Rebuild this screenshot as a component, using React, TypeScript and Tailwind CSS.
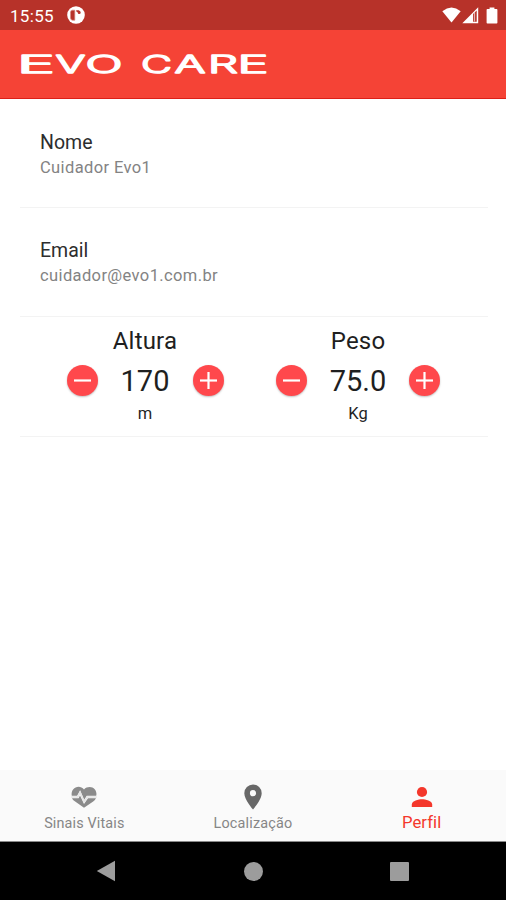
import React, { useState } from 'react';

interface ProfileFieldProps {
  label: string;
  value: string;
  spacing: string;
}

interface StepperProps {
  title: string;
  unit: string;
  display: string;
  width: string;
  onDecrease: () => void;
  onIncrease: () => void;
}

// x position and drawn width of every wordmark letter
const WORDMARK = [
  { char: 'E', x: 17, width: 38 },
  { char: 'V', x: 55.5, width: 30 },
  { char: 'O', x: 85.5, width: 37 },
  { char: 'C', x: 141, width: 31 },
  { char: 'A', x: 174.5, width: 31 },
  { char: 'R', x: 208, width: 30 },
  { char: 'E', x: 237.5, width: 31 },
];

const StatusBar: React.FC = () => (
  <div className="flex h-[30px] items-center bg-[#b73229] pl-[10px] pr-[8px] text-white">
    <span className="w-[45px] pt-[2px] text-[17px] leading-[20px] tracking-[0.3px]">15:55</span>
    <svg className="ml-[12px] h-[18px] w-[18px]" viewBox="0 0 18 18">
      <circle cx="9" cy="9" r="8.8" fill="#fff" />
      <path d="M5.2 4.2Q3.5 4.4 3.5 6.2V12Q3.5 14 5.4 14.2H7.8V4.2Z" fill="#b73229" stroke="#d98a84" strokeWidth=".7" />
      <path d="M9.2 4.2H11.6Q13.8 4.6 13.8 7Q12.6 8.8 11 7.4Q10.8 5.8 9.2 5.6Z" fill="#b73229" />
    </svg>
    <div className="ml-auto flex items-center">
      <svg className="h-[16px] w-[19px]" viewBox="0 0 19 16">
        <path d="M.3 4.2Q9.5-3 18.7 4.2L9.5 15.6Z" fill="#fff" />
      </svg>
      <svg className="ml-[1px] h-[17px] w-[17px]" viewBox="0 0 17 17">
        <path fillRule="evenodd" d="M16.2.3V16.2H.3ZM11.1 7.1V14.7H14.7V3.5Z" fill="#fff" />
        <path d="M12.6 5.4V14.5" stroke="#fff" strokeWidth=".7" />
      </svg>
      <svg className="ml-[7px] h-[17px] w-[12px]" viewBox="0 0 12 17">
        <path d="M3.6.5H8.4V2H10.6Q11.4 2 11.4 2.8V15.7Q11.4 16.5 10.6 16.5H1.4Q.6 16.5.6 15.7V2.8Q.6 2 1.4 2H3.6Z" fill="#fff" />
      </svg>
    </div>
  </div>
);

const Header: React.FC = () => (
  <header className="flex h-[69px] items-center border-b border-[#dc2018] bg-[#f54336] pl-[16px]">
    <svg className="h-[30px] w-[256px] font-['Inter'] font-light" viewBox="16 49 256 30" fill="#fff" stroke="#fff" strokeWidth="1.3" strokeLinejoin="round" fontSize="23.5">
      {WORDMARK.map(({ char, x, width }) => (
        <text key={x} x={x} y="72.8" textLength={width} lengthAdjust="spacingAndGlyphs">{char}</text>
      ))}
    </svg>
  </header>
);

const ProfileField: React.FC<ProfileFieldProps> = ({ label, value, spacing }) => (
  <div className={`ml-5 mr-[18px] flex h-[109px] flex-col border-b border-[#f3f3f3] pl-5 ${spacing}`}>
    <span className="text-[19.5px] leading-[24px] text-[#2d2d2d]">{label}</span>
    <span className="mt-[1px] text-[16.5px] leading-[24px] tracking-[0.38px] text-[#838383]">{value}</span>
  </div>
);

const RoundButton: React.FC<{ plus?: boolean; label: string; onClick: () => void }> = ({ plus, label, onClick }) => (
  <button aria-label={label} onClick={onClick} className="h-[31px] w-[31px] rounded-full bg-[#ff484c] shadow-[0_1px_2px_rgba(0,0,0,0.25)]">
    <svg viewBox="0 0 31 31" className="h-[31px] w-[31px]" stroke="#fff" strokeWidth="2.2">
      <path d="M7 15.5H24" />
      {plus && <path d="M15.5 7V24" />}
    </svg>
  </button>
);

const Stepper: React.FC<StepperProps> = ({ title, unit, display, width, onDecrease, onIncrease }) => (
  <div className="flex w-[212px] flex-col items-center text-[#1f1f1f]">
    <span className="text-[24px] leading-[28px] tracking-[0.2px]">{title}</span>
    <div className={`mt-[8px] flex h-[35px] items-center justify-between ${width}`}>
      <RoundButton label={`Diminuir ${title}`} onClick={onDecrease} />
      <span className="pt-[2px] text-[29px] leading-[33px]">{display}</span>
      <RoundButton plus label={`Aumentar ${title}`} onClick={onIncrease} />
    </div>
    <span className="mt-[6px] text-[16.5px] leading-[20px]">{unit}</span>
  </div>
);

const TabBar: React.FC = () => (
  <nav className="grid h-[72px] grid-cols-3 border-b border-[#8a8a8a] bg-[#fafafa] text-[#868686]">
    <div className="flex flex-col items-center pt-[16px]">
      <svg className="h-[22px] w-[26px]" viewBox="0 0 26 22">
        <path d="M13 3.4C10-.3 4.8.2 2.3 3.2C.7 5.1.3 7.4.8 9.8H6.1L9.1 4.2L13.2 13.7L15.7 9.8H25.2C25.8 7.4 25.3 5.1 23.7 3.2C21.2.2 16 .2 13 3.4Z" fill="#8b8b8b" />
        <path d="M1 12.2H7.6L9 9.5L13 18L17 12.2H25Q24.2 14 22.2 15.4L13 21.7L3.8 15.3Q1.8 14 1 12.2Z" fill="#8b8b8b" />
        <path d="M.2 11H6.8L9.1 6.4L13.1 15.8L16.3 11H25.8" fill="none" stroke="#e4e4e4" strokeWidth="1.5" />
      </svg>
      <span className="mt-[6px] text-[14.4px] leading-[20px] tracking-[0.15px]">Sinais Vitais</span>
    </div>
    <div className="flex flex-col items-center pt-[14px]">
      <svg className="h-[26px] w-[18px]" viewBox="0 0 18 26">
        <path fillRule="evenodd" d="M9 .5A8.7 8.7 0 0 0 .3 9.2C.3 15.7 9 25.5 9 25.5S17.7 15.7 17.7 9.2A8.7 8.7 0 0 0 9 .5ZM9 12.3A3.1 3.1 0 1 1 9 6.1A3.1 3.1 0 0 1 9 12.3Z" fill="#686868" />
      </svg>
      <span className="mt-[4px] text-[14.4px] leading-[20px] tracking-[0.2px]">Localização</span>
    </div>
    <div className="flex flex-col items-center pt-[16px] text-[#f4372b]">
      <svg className="h-[22px] w-[22px]" viewBox="0 0 22 22">
        <circle cx="11" cy="6" r="5.1" fill="currentColor" />
        <path d="M.8 21V18.4C.8 15 7.6 13.3 11 13.3S21.2 15 21.2 18.4V21Z" fill="currentColor" />
      </svg>
      <span className="mt-[5px] text-[16.7px] leading-[20px] tracking-[0.1px]">Perfil</span>
    </div>
  </nav>
);

const SystemNav: React.FC = () => (
  <div className="flex h-[58px] items-center justify-between bg-black pl-[96px] pr-[96px]">
    <svg className="h-[22px] w-[20px]" viewBox="0 0 20 22">
      <path d="M.8 11L19 .7V21.3Z" fill="#9c9c9c" />
    </svg>
    <div className="ml-[1px] h-[19px] w-[19px] rounded-full bg-[#9c9c9c]" />
    <div className="mr-[1px] h-[19px] w-[19px] rounded-[1px] bg-[#9c9c9c]" />
  </div>
);

const App: React.FC = () => {
  const [height, setHeight] = useState(170);
  const [weight, setWeight] = useState(75);

  return (
    <div className="flex h-[900px] w-[506px] flex-col overflow-hidden bg-white font-['Roboto',sans-serif]">
      <StatusBar />
      <Header />
      <main className="flex-1">
        <ProfileField label="Nome" value="Cuidador Evo1" spacing="pt-[32px]" />
        <ProfileField label="Email" value="cuidador@evo1.com.br" spacing="pt-[31px]" />
        <section className="ml-5 mr-[18px] flex h-[120px] gap-px border-b border-[#f3f3f3] pl-[19px] pt-[10px]">
          <Stepper
            title="Altura"
            unit="m"
            display={String(height)}
            width="w-[157px]"
            onDecrease={() => setHeight(height - 1)}
            onIncrease={() => setHeight(height + 1)}
          />
          <Stepper
            title="Peso"
            unit="Kg"
            display={weight.toFixed(1)}
            width="w-[164px]"
            onDecrease={() => setWeight(weight - 0.5)}
            onIncrease={() => setWeight(weight + 0.5)}
          />
        </section>
      </main>
      <TabBar />
      <SystemNav />
    </div>
  );
};

export default App;
